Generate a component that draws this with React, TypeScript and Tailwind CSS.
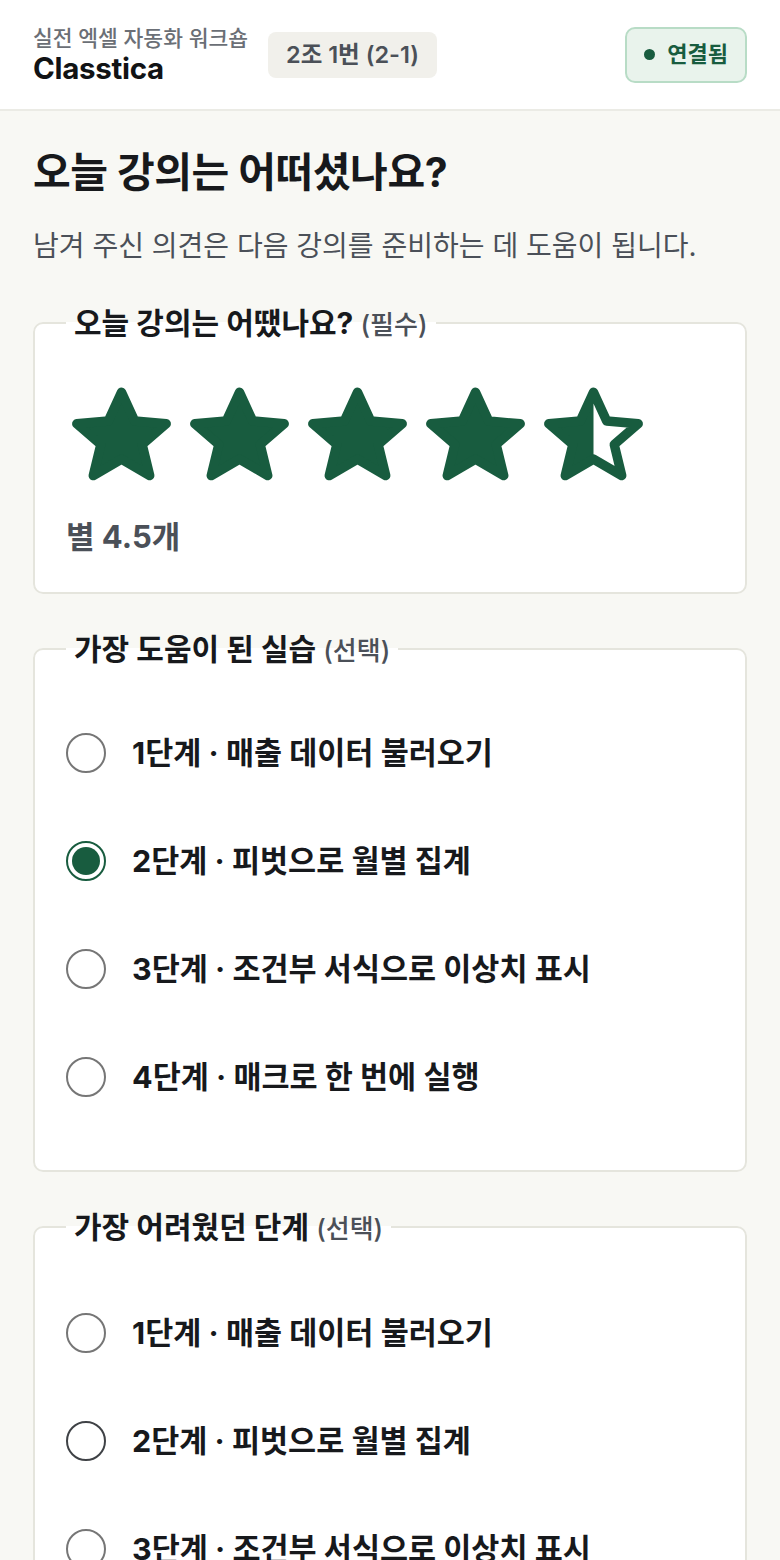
import { useState } from "react";

const FONT = { fontFamily: 'Inter, "Noto Sans CJK KR", sans-serif' };

const STEPS = [
  "1단계 · 매출 데이터 불러오기",
  "2단계 · 피벗으로 월별 집계",
  "3단계 · 조건부 서식으로 이상치 표시",
  "4단계 · 매크로 한 번에 실행",
];

const STAR = "M12 2.6l2.8 6.1 6.7.6-5.1 4.4 1.6 6.6L12 16.8l-6 3.5 1.6-6.6-5.1-4.4 6.7-.6z";

function Star({ fill, id }: { fill: "full" | "half" | "empty"; id: string }) {
  return (
    <svg width="113" height="113" viewBox="0 0 24 24" aria-hidden="true">
      <defs>
        <clipPath id={id}>
          <rect x="0" y="0" width="12" height="24" />
        </clipPath>
      </defs>
      {fill === "full" ? (
        <path d={STAR} fill="#185c3f" stroke="#185c3f" strokeWidth="2" strokeLinejoin="round" />
      ) : (
        <>
          {fill === "half" && (
            <path d={STAR} fill="#185c3f" clipPath={`url(#${id})`} />
          )}
          <path d={STAR} fill="none" stroke="#185c3f" strokeWidth="2" strokeLinejoin="round" />
        </>
      )}
    </svg>
  );
}

function Card({ title, note, children }: { title: string; note: string; children: React.ReactNode }) {
  return (
    <fieldset className="border-2 border-[#e5e5dd] rounded-[10px] bg-white px-[31px] min-w-0">
      <legend className="px-2 text-[30px] leading-8 font-bold text-[#17191c]">
        {title} <span className="text-[26px] leading-none font-medium text-[#4b5058]">{note}</span>
      </legend>
      {children}
    </fieldset>
  );
}

function RadioList({ selected, dark, onPick }: { selected: number | null; dark?: number; onPick: (i: number) => void }) {
  return (
    <div>
      {STEPS.map((s, i) => {
        const on = selected === i;
        return (
          <button
            key={s}
            type="button"
            onClick={() => onPick(i)}
            className="h-[108px] w-full flex items-center gap-[26px] text-left"
          >
            <span
              className={
                on
                  ? "w-10 h-10 rounded-full border-2 border-[#185c3f] flex items-center justify-center shrink-0"
                  : dark === i
                  ? "w-10 h-10 rounded-full border-2 border-[#3f4246] shrink-0"
                  : "w-10 h-10 rounded-full border-2 border-[#767676] shrink-0"
              }
            >
              {on && <span className="w-7 h-7 rounded-full bg-[#185c3f]" />}
            </span>
            <span className="text-[30.5px] leading-10 font-bold text-[#17191c]">{s}</span>
          </button>
        );
      })}
    </div>
  );
}

export default function App() {
  const [helpful, setHelpful] = useState<number | null>(1);
  const [hard, setHard] = useState<number | null>(null);

  return (
    <div style={FONT} className="min-h-screen bg-[#f8f8f4]">
      {/* Header */}
      <header className="h-[111px] bg-white border-b-2 border-[#ebebe5] px-[33px] flex items-center justify-between">
        <div className="flex items-center gap-5">
          <div>
            <div className="text-[21.5px] leading-[26px] font-medium text-[#6b6f76]">실전 엑셀 자동화 워크숍</div>
            <div className="text-[29.5px] leading-[34px] font-bold text-[#111315] tracking-[-0.01em]">Classtica</div>
          </div>
          <div className="h-[46px] px-[18px] rounded-lg bg-[#f1f0eb] flex items-center text-[23.5px] font-semibold text-[#4b5058]">
            2조 1번 (2-1)
          </div>
        </div>
        <div className="h-14 px-[17px] rounded-[10px] border-2 border-[#b8dcc6] bg-[#e9f3ec] flex items-center gap-3">
          <span className="w-[11px] h-[11px] rounded-full bg-[#185c3f]" />
          <span className="text-[22px] font-bold text-[#185c3f]">연결됨</span>
        </div>
      </header>

      <main className="px-[33px] pt-[37px] pb-12">
        <h1 className="text-[41px] leading-[48px] font-bold text-[#17191c] tracking-[-0.01em]">오늘 강의는 어떠셨나요?</h1>
        <p className="mt-[34px] text-[28px] leading-8 text-[#4b5058]">
          남겨 주신 의견은 다음 강의를 준비하는 데 도움이 됩니다.
        </p>

        <div className="mt-[45px] flex flex-col gap-[39px]">
          <Card title="오늘 강의는 어땠나요?" note="(필수)">
            <div className="pt-[41px] pb-[39px]">
              <div className="flex gap-[5px] -ml-[1px]">
                {[0, 1, 2, 3].map((i) => (
                  <Star key={i} fill="full" id={`s${i}`} />
                ))}
                <Star fill="half" id="s4" />
              </div>
              <div className="mt-7 text-[31px] leading-8 font-bold text-[#4b5058]">별 4.5개</div>
            </div>
          </Card>

          <Card title="가장 도움이 된 실습" note="(선택)">
            <div className="pt-[34px] pb-[39px]">
              <RadioList selected={helpful} onPick={setHelpful} />
            </div>
          </Card>

          <Card title="가장 어려웠던 단계" note="(선택)">
            <div className="pt-[36px] pb-[39px]">
              <RadioList selected={hard} dark={1} onPick={setHard} />
            </div>
          </Card>
        </div>
      </main>
    </div>
  );
}
